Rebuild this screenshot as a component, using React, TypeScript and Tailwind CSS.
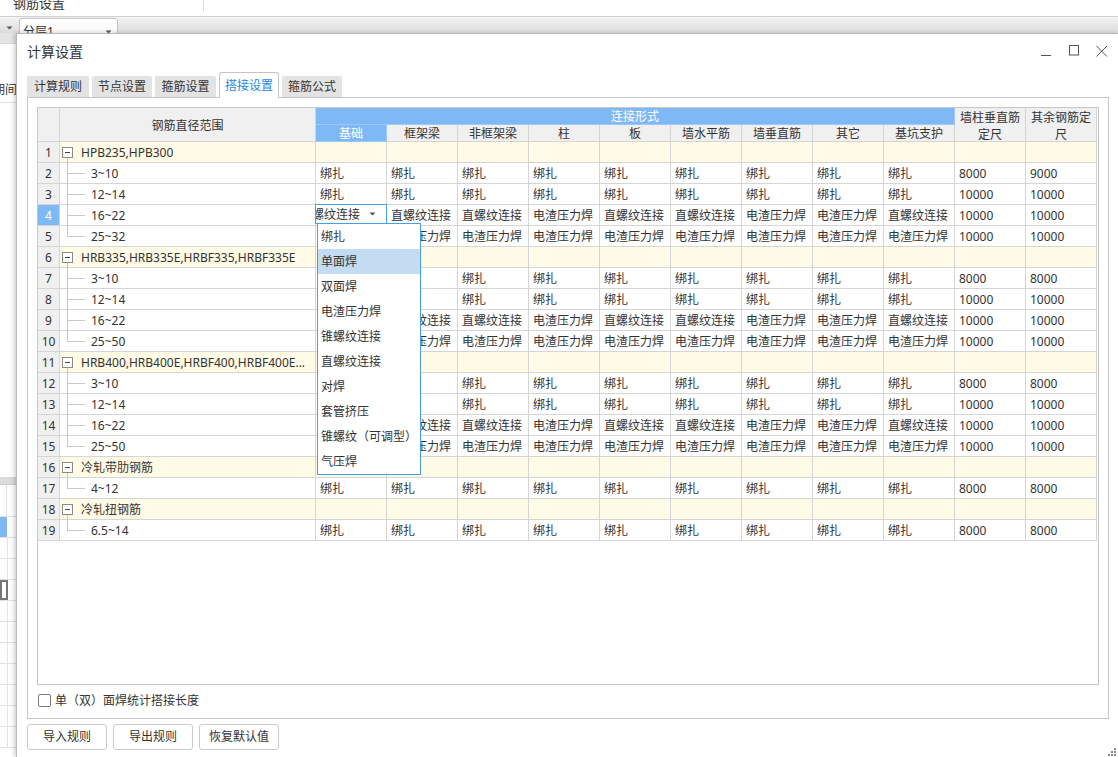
import React from 'react'

const B = '绑扎'
const Z = '直螺纹连接'
const D = '电渣压力焊'
const ties = Array(9).fill(B)
const mid = [Z, Z, Z, D, Z, Z, D, D, Z, '10000', '10000']
const big = [...Array(9).fill(D), '10000', '10000']

type Row = { n: number; group?: string; label?: string; cells?: string[]; last?: boolean }

const rows: Row[] = [
  { n: 1, group: 'HPB235,HPB300' },
  { n: 2, label: '3~10', cells: [...ties, '8000', '9000'] },
  { n: 3, label: '12~14', cells: [...ties, '10000', '10000'] },
  { n: 4, label: '16~22', cells: mid },
  { n: 5, label: '25~32', cells: big, last: true },
  { n: 6, group: 'HRB335,HRB335E,HRBF335,HRBF335E' },
  { n: 7, label: '3~10', cells: [...ties, '8000', '8000'] },
  { n: 8, label: '12~14', cells: [...ties, '10000', '10000'] },
  { n: 9, label: '16~22', cells: mid },
  { n: 10, label: '25~50', cells: big, last: true },
  { n: 11, group: 'HRB400,HRB400E,HRBF400,HRBF400E...' },
  { n: 12, label: '3~10', cells: [...ties, '8000', '8000'] },
  { n: 13, label: '12~14', cells: [...ties, '10000', '10000'] },
  { n: 14, label: '16~22', cells: mid },
  { n: 15, label: '25~50', cells: big, last: true },
  { n: 16, group: '冷轧带肋钢筋' },
  { n: 17, label: '4~12', cells: [...ties, '8000', '8000'], last: true },
  { n: 18, group: '冷轧扭钢筋' },
  { n: 19, label: '6.5~14', cells: [...ties, '8000', '8000'], last: true },
]

const subHeads = ['基础', '框架梁', '非框架梁', '柱', '板', '墙水平筋', '墙垂直筋', '其它', '基坑支护']
const options = ['绑扎', '单面焊', '双面焊', '电渣压力焊', '锥螺纹连接', '直螺纹连接', '对焊', '套管挤压', '锥螺纹（可调型）', '气压焊']
const tabs = [
  { name: '计算规则', w: 'w-[62px]' },
  { name: '节点设置', w: 'w-[60px]' },
  { name: '箍筋设置', w: 'w-[61px]' },
  { name: '搭接设置', w: 'w-[60px]', active: true },
  { name: '箍筋公式', w: 'w-[60px]' },
]

function Arrow() {
  return (
    <svg width="7" height="4" viewBox="0 0 7 4">
      <polygon points="0.5,0.5 6.5,0.5 3.5,3.5" fill="#555" />
    </svg>
  )
}

function GridRow({ row }: { row: Row }) {
  const isGroup = !!row.group
  const active = row.n === 4
  const fill = isGroup ? 'bg-[#fffbe6]' : 'bg-white'
  return (
    <div className="flex h-[21px]">
      <div
        className={`w-[22px] shrink-0 border-r border-b border-[#d5d5d5] flex items-center justify-center pt-[2px] ${
          active ? 'bg-[#7fb9f5] text-white' : 'bg-[#f0f0f0]'
        }`}
      >
        {row.n}
      </div>
      <div className={`relative w-[256px] shrink-0 border-r border-b border-[#d5d5d5] flex items-center ${fill}`}>
        {isGroup ? (
          <>
            <span className="absolute left-[7px] top-[16px] h-[6px] w-px bg-[#c8c8c8]" />
            <span className="ml-[2px] w-[11px] h-[11px] shrink-0 border border-[#8a8a8a] bg-white flex items-center justify-center">
              <span className="w-[5px] h-px bg-[#444]" />
            </span>
            <span className="ml-[8px] pt-[2px] whitespace-nowrap overflow-hidden">{row.group}</span>
          </>
        ) : (
          <>
            <span className={`absolute left-[7px] top-0 w-px bg-[#c8c8c8] ${row.last ? 'h-[11px]' : 'h-[21px]'}`} />
            <span className="absolute left-[7px] top-[10px] w-[18px] h-px bg-[#c8c8c8]" />
            <span className="pl-[31px] pt-[2px] whitespace-nowrap">{row.label}</span>
          </>
        )}
      </div>
      {subHeads.concat(['a', 'b']).map((h, i) => (
        <div
          key={h}
          className={`w-[71px] shrink-0 border-r border-b border-[#d5d5d5] flex items-center px-[4px] pt-[2px] overflow-hidden whitespace-nowrap ${fill}`}
        >
          {row.cells ? row.cells[i] : ''}
        </div>
      ))}
    </div>
  )
}

function LeftStrip() {
  return (
    <div className="w-[16px] shrink-0 flex flex-col overflow-hidden bg-white">
      <div className="h-[11px] bg-[#e4e4e4] border-b border-[#d8d8d8]" />
      <div className="h-[59px] border-b border-[#e2e2e2] flex items-end justify-end pb-[4px] overflow-hidden">
        <span className="whitespace-nowrap -mr-[1px]">期间</span>
      </div>
      <div className="h-[374px]" />
      <div className="h-[8px] bg-[#dcdcdc] border-b border-[#cfcfcf]" />
      <div className="h-[32px] flex border-b border-[#e2e2e2]">
        <div className="w-[7px] border-r border-[#e2e2e2]" />
      </div>
      <div className="h-[21px] flex border-b border-[#e2e2e2]">
        <div className="w-[7px] bg-[#7fb9f5]" />
      </div>
      {Array.from({ length: 10 }).map((_, i) => (
        <div key={i} className="h-[21px] shrink-0 flex border-b border-[#e2e2e2]">
          <div className={`w-[8px] ${i === 2 ? 'border-2 border-[#777]' : 'border-r border-[#e2e2e2]'}`} />
        </div>
      ))}
    </div>
  )
}

export default function App() {
  return (
    <div className="w-[1118px] h-[757px] overflow-hidden bg-white flex flex-col font-['Noto_Sans','Noto_Sans_CJK_SC',sans-serif] text-[12px] leading-[16px] text-[#333]">
      <div className="h-[17px] shrink-0 flex border-b border-[#d2d2d2] overflow-hidden">
        <div className="w-[204px] h-[12px] border-r border-[#dcdcdc] overflow-hidden">
          <span className="block pl-[13px] -mt-[6px] text-[13px] leading-[18px]">钢筋设置</span>
        </div>
      </div>
      <div className="h-[16px] shrink-0 flex items-start overflow-hidden bg-gradient-to-b from-[#f3f3f3] to-[#dcdcdc]">
        <div className="w-[19px] h-[16px] flex items-end justify-center pb-[3px]">
          <Arrow />
        </div>
        <div className="mt-[1px] w-[99px] h-[26px] border border-[#c4c4c4] rounded-[3px] bg-gradient-to-b from-white to-[#f2f2f2] flex items-start justify-between pl-[3px] pr-[5px] pt-[5px]">
          <span>分层1</span>
          <span className="mt-[6px]">
            <Arrow />
          </span>
        </div>
      </div>

      <div className="flex flex-1 min-h-0">
        <LeftStrip />
        <div className="relative flex-1 flex flex-col bg-white border-l border-t border-[#b9b9b9] shadow-[-2px_0_4px_rgba(0,0,0,0.18)]">
          <div className="h-[38px] shrink-0 flex justify-between">
            <div className="pl-[10px] pb-[2px] flex items-center text-[14px] leading-[20px]">计算设置</div>
            <div className="flex mt-[11px] mr-[2px] h-[12px]">
              <div className="w-[28px] flex justify-center">
                <svg width="12" height="12" viewBox="0 0 12 12">
                  <line x1="1" y1="10.5" x2="11" y2="10.5" stroke="#555" strokeWidth="1" />
                </svg>
              </div>
              <div className="w-[28px] flex justify-center">
                <svg width="12" height="12" viewBox="0 0 12 12">
                  <rect x="1.5" y="0.5" width="9" height="9.5" fill="none" stroke="#555" strokeWidth="1" />
                </svg>
              </div>
              <div className="w-[28px] flex justify-center">
                <svg width="12" height="12" viewBox="0 0 12 12">
                  <path d="M0.5 1 L11 11.5 M11 1 L0.5 11.5" stroke="#555" strokeWidth="1" />
                </svg>
              </div>
            </div>
          </div>

          <div className="h-[26px] shrink-0 -mb-px relative z-10 flex items-end gap-[3px] pl-[10px]">
            {tabs.map(t =>
              t.active ? (
                <div
                  key={t.name}
                  className={`${t.w} h-[26px] bg-white border border-b-0 border-[#c4c4c4] rounded-t-[3px] flex items-center justify-center text-[#1f88e5]`}
                >
                  {t.name}
                </div>
              ) : (
                <div
                  key={t.name}
                  className={`${t.w} h-[21px] mb-px bg-[#e3e3e3] rounded-t-[2px] flex items-center justify-center`}
                >
                  {t.name}
                </div>
              )
            )}
          </div>

          <div className="ml-[10px] w-[1082px] h-[622px] shrink-0 border border-[#c6c6c6] pt-[9px] pl-[9px] flex flex-col">
            <div className="relative w-[1062px] h-[578px] shrink-0 border border-[#c6c6c6] bg-white overflow-hidden">
              <div className="flex h-[34px]">
                <div className="w-[22px] shrink-0 border-r border-b border-[#d5d5d5] bg-[#f0f0f0]" />
                <div className="w-[256px] shrink-0 border-r border-b border-[#d5d5d5] bg-[#f0f0f0] flex items-center justify-center pt-[2px]">
                  钢筋直径范围
                </div>
                <div className="w-[639px] shrink-0 flex flex-col">
                  <div className="h-[17px] bg-[#7fb9f5] border-r border-b border-[#9cc9f7] flex items-center justify-center pt-[2px] text-white">
                    连接形式
                  </div>
                  <div className="flex h-[17px]">
                    {subHeads.map((h, i) => (
                      <div
                        key={h}
                        className={`w-[71px] shrink-0 border-r border-b flex items-center justify-center pt-[2px] ${
                          i === 0 ? 'bg-[#7fb9f5] text-white border-[#9cc9f7]' : 'bg-[#f0f0f0] border-[#d5d5d5]'
                        }`}
                      >
                        {h}
                      </div>
                    ))}
                  </div>
                </div>
                <div className="w-[71px] shrink-0 border-r border-b border-[#d5d5d5] bg-[#f0f0f0] flex flex-col items-center justify-center pt-[2px] leading-[17px]">
                  <span>墙柱垂直筋</span>
                  <span>定尺</span>
                </div>
                <div className="w-[71px] shrink-0 border-r border-b border-[#d5d5d5] bg-[#f0f0f0] flex flex-col items-center justify-center pt-[2px] leading-[17px]">
                  <span>其余钢筋定</span>
                  <span>尺</span>
                </div>
              </div>
              {rows.map(r => (
                <GridRow key={r.n} row={r} />
              ))}

              <div className="absolute left-[277px] top-[96px] w-[72px] h-[20px] border border-[#4b9fe5] bg-white flex items-center pt-[1px] overflow-hidden">
                <span className="ml-[-16px] whitespace-nowrap">直螺纹连接</span>
                <span className="ml-[9px] mb-[1px]">
                  <Arrow />
                </span>
              </div>
              <div className="absolute left-[279px] top-[115px] w-[104px] border border-[#4a9fe0] bg-white flex flex-col">
                {options.map(o => (
                  <div
                    key={o}
                    className={`h-[25px] flex items-center pl-[3px] pt-[1px] whitespace-nowrap ${o === '单面焊' ? 'bg-[#c4dcf2]' : ''}`}
                  >
                    {o}
                  </div>
                ))}
              </div>
            </div>

            <div className="mt-[7px] flex items-center pl-[1px]">
              <span className="w-[13px] h-[13px] border border-[#7a7a7a] rounded-[2px] bg-white" />
              <span className="ml-[4px] pt-[1px]">单（双）面焊统计搭接长度</span>
            </div>
          </div>

          <div className="mt-[5px] ml-[10px] flex gap-[6px]">
            {['导入规则', '导出规则', '恢复默认值'].map(b => (
              <button
                key={b}
                className="w-[80px] h-[26px] border border-[#cbcbcb] rounded-[3px] bg-white text-[12px] text-[#333]"
              >
                {b}
              </button>
            ))}
          </div>

          <svg className="absolute right-[2px] bottom-[1px]" width="8" height="8" viewBox="0 0 8 8">
            <rect x="6" y="0" width="2" height="2" fill="#888" />
            <rect x="6" y="3" width="2" height="2" fill="#888" />
            <rect x="3" y="3" width="2" height="2" fill="#888" />
            <rect x="6" y="6" width="2" height="2" fill="#888" />
            <rect x="3" y="6" width="2" height="2" fill="#888" />
            <rect x="0" y="6" width="2" height="2" fill="#888" />
          </svg>
        </div>
      </div>
    </div>
  )
}
